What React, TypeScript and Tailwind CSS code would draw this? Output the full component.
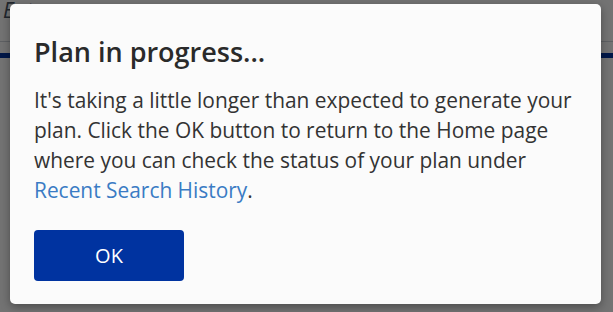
import React from 'react';

const App: React.FC = () => {
  return (
    <div className="relative h-[312px] w-[613px] overflow-hidden bg-white font-['Open_Sans',sans-serif]">
      {/* page behind the dialog */}
      <div className="flex h-[42px] items-start border-b border-gray-300 px-[3px]">
        <span className="-mt-[5px] text-[21px] leading-[30px] italic text-gray-600">Enter a query</span>
      </div>
      <div className="mt-[11px] h-[5px] bg-[#0033a0]" />

      {/* backdrop */}
      <div className="absolute inset-0 bg-black/55" />

      {/* dialog */}
      <div className="absolute left-[10px] top-[4px] h-[300px] w-[591px] rounded-[5px] bg-[#fbfbfb] px-[24px] pt-[30px] shadow-[0_3px_10px_rgba(0,0,0,0.35)]">
        <h2 className="text-[27px] font-semibold leading-[36px] text-[#2a2a2a]">Plan in progress...</h2>
        <p className="mt-[15px] text-[20.9px] leading-[30px] text-[#333]">
          It's taking a little longer than expected to generate your plan. Click the OK button to return to the Home page
          where you can check the status of your plan under{' '}
          <a className="text-[#3a7bc4]">Recent Search History</a>.
        </p>
        <button className="mt-[25px] h-[51px] w-[150px] rounded-[4px] bg-[#0033a0] text-[20px] text-white">OK</button>
      </div>
    </div>
  );
};

export default App;
